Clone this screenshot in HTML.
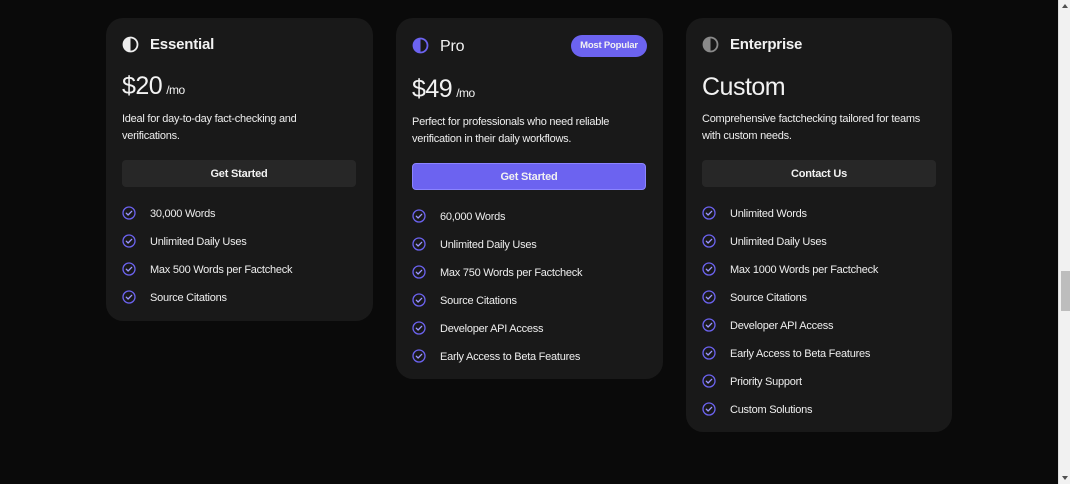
<!DOCTYPE html>
<html><head><meta charset="utf-8"><style>
*{margin:0;padding:0;box-sizing:border-box}
body{width:1070px;height:484px;background:#0a0a0a;overflow:hidden;position:relative;font-family:"Liberation Sans",sans-serif;color:#f2f2f2}
.card{position:absolute;background:#191919;border-radius:17px;top:18px}
.abs{position:absolute;white-space:nowrap}
.title{font-size:15px;font-weight:bold;letter-spacing:-0.2px}
.price{font-size:25px;letter-spacing:-0.5px}
.price small{font-size:12px;margin-left:4px}
.desc{font-size:11px;line-height:17px;letter-spacing:-0.25px;white-space:normal;width:220px;color:#eee}
.btn{position:absolute;left:16px;width:234px;height:27px;border-radius:4px;background:#272727;font-size:11px;font-weight:bold;text-align:center;line-height:28px;letter-spacing:-0.2px}
.feat{position:absolute;left:16px;font-size:11px;letter-spacing:-0.25px;height:16px;line-height:16px;white-space:nowrap;color:#eee}
.feat svg{position:absolute;left:0;top:0}
.feat span{position:absolute;left:28px}
.sb{position:absolute;right:0;top:0;width:12px;height:484px;background:#f1f1f1;border-left:1px solid #e0e0e0}
.thumb{position:absolute;left:2px;top:271px;width:9px;height:40px;background:#bdbdbd}
</style></head><body>

<div class="card" style="left:106px;width:267px;height:303px">
  <svg class="abs" style="left:16px;top:18px" width="17" height="17" viewBox="0 0 17 17"><circle cx="8.5" cy="8.5" r="7" fill="none" stroke="#eee" stroke-width="1.8"/><path d="M8.5 1.5A7 7 0 0 0 8.5 15.5Z" fill="#eee"/></svg>
  <div class="abs title" style="left:44px;top:18px">Essential</div>
  <div class="abs price" style="left:16px;top:54px">$20<small>/mo</small></div>
  <div class="abs desc" style="left:16px;top:93px">Ideal for day-to-day fact-checking and verifications.</div>
  <div class="btn" style="top:142px">Get Started</div>
</div>

<div class="card" style="left:396px;width:267px;height:361px">
  <svg class="abs" style="left:16px;top:19px" width="17" height="17" viewBox="0 0 17 17"><circle cx="8.5" cy="8.5" r="7" fill="none" stroke="#6c63f0" stroke-width="1.8"/><path d="M8.5 1.5A7 7 0 0 0 8.5 15.5Z" fill="#6c63f0"/></svg>
  <div class="abs title" style="left:44px;top:20px;font-weight:normal;font-size:16px">Pro</div>
  <div class="abs" style="left:175px;top:17px;width:76px;height:22px;border-radius:11px;background:#6c63f0;font-size:9.5px;font-weight:bold;text-align:center;line-height:22px;letter-spacing:-0.2px">Most Popular</div>
  <div class="abs price" style="left:16px;top:57px">$49<small>/mo</small></div>
  <div class="abs desc" style="left:16px;top:96px;width:230px">Perfect for professionals who need reliable verification in their daily workflows.</div>
  <div class="btn" style="top:145px;background:#6c63f0;border:1px solid #8b84ff;line-height:26px">Get Started</div>
</div>

<div class="card" style="left:686px;width:266px;height:414px">
  <svg class="abs" style="left:16px;top:18px" width="17" height="17" viewBox="0 0 17 17"><circle cx="8.5" cy="8.5" r="7" fill="none" stroke="#8a8a8a" stroke-width="1.8"/><path d="M8.5 1.5A7 7 0 0 0 8.5 15.5Z" fill="#8a8a8a"/></svg>
  <div class="abs title" style="left:44px;top:18px">Enterprise</div>
  <div class="abs price" style="left:16px;top:55px">Custom</div>
  <div class="abs desc" style="left:16px;top:93px;width:235px">Comprehensive factchecking tailored for teams with custom needs.</div>
  <div class="btn" style="top:142px">Contact Us</div>
</div>

<div class="sb"><div class="thumb"></div>
<div style="position:absolute;left:3px;top:4px;width:0;height:0;border-left:3px solid transparent;border-right:3px solid transparent;border-bottom:4px solid #505050"></div>
<div style="position:absolute;left:3px;top:476px;width:0;height:0;border-left:3px solid transparent;border-right:3px solid transparent;border-top:4px solid #505050"></div>
</div>

<script>
const chk='<svg width="14" height="14" viewBox="0 0 14 14"><circle cx="7" cy="7" r="6" fill="none" stroke="#6c63f0" stroke-width="1.3"/><path d="M4.3 7.2l1.8 1.8 3.6-3.7" fill="none" stroke="#9c97ff" stroke-width="1.3" stroke-linecap="round" stroke-linejoin="round"/></svg>';
const data=[
 [0,188,["30,000 Words","Unlimited Daily Uses","Max 500 Words per Factcheck","Source Citations"]],
 [1,191,["60,000 Words","Unlimited Daily Uses","Max 750 Words per Factcheck","Source Citations","Developer API Access","Early Access to Beta Features"]],
 [2,188,["Unlimited Words","Unlimited Daily Uses","Max 1000 Words per Factcheck","Source Citations","Developer API Access","Early Access to Beta Features","Priority Support","Custom Solutions"]]
];
const cards=document.querySelectorAll('.card');
data.forEach(([i,top,list])=>{list.forEach((t,k)=>{const d=document.createElement('div');d.className='feat';d.style.top=(top+k*28)+'px';d.innerHTML=chk+'<span>'+t+'</span>';cards[i].appendChild(d);});});
</script>
</body></html>
